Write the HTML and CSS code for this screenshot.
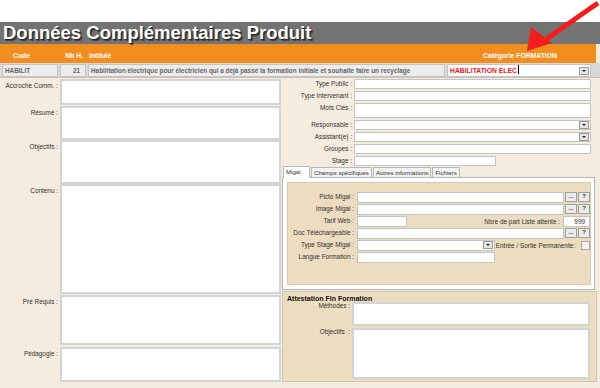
FILE: index.html
```html
<!DOCTYPE html>
<html lang="fr">
<head>
    <meta charset="UTF-8">
    <title>Données Complémentaires Produit</title>
    <link rel="stylesheet" href="styles.css">
</head>
<body>
    <div class="top-space"></div>

    <div class="title-bar">
        <h1>Données Complémentaires Produit</h1>
    </div>

    <div class="head-bar">
        <span class="col-code">Code</span>
        <span class="col-nbh">Nb H.</span>
        <span class="col-title">Intitulé</span>
        <span class="col-cat">Catégorie FORMATION</span>
    </div>

    <div class="info-row">
        <div class="field ro col-code">HABILIT</div>
        <div class="field ro col-nbh num">21</div>
        <div class="field ro col-title">Habilitation électrique pour électricien qui a déjà passé la formation initiale et souhaite faire un recyclage</div>
        <div class="field col-cat select red">HABILITATION ELEC<span class="caret-bar"></span><span class="drop"></span></div>
    </div>

    <div class="main">
        <!-- left column: text areas -->
        <div class="left-col">
            <label>Accroche Comm. :</label><div class="area h-acc"></div>
            <label class="l-res">Résumé :</label><div class="area h-res"></div>
            <label>Objectifs :</label><div class="area h-obj"></div>
            <label>Contenu :</label><div class="area h-cont"></div>
            <label class="l-pre">Pré Requis :</label><div class="area h-pre"></div>
            <label class="l-peda">Pédagogie :</label><div class="area h-peda"></div>
        </div>

        <!-- right column -->
        <div class="right-col">
            <div class="form-grid">
                <label>Type Public :</label><div class="field"></div>
                <label>Type Intervenant :</label><div class="field"></div>
                <label>Mots Clés :</label><div class="field tall"></div>
                <label>Responsable :</label><div class="field select"><span class="drop"></span></div>
                <label>Assistant(e) :</label><div class="field select"><span class="drop"></span></div>
                <label>Groupes :</label><div class="field"></div>
                <label>Stage :</label><div class="field short"></div>
            </div>

            <div class="tabs">
                <span class="tab active">Migal</span>
                <span class="tab">Champs spécifiques</span>
                <span class="tab">Autres informations</span>
                <span class="tab">Fichiers</span>
            </div>
            <div class="tab-panel">
                <div class="migal">
                    <label>Picto Migal :</label>
                    <div class="line"><div class="field grow"></div><span class="btn">...</span><span class="btn">?</span></div>

                    <label>Image Migal :</label>
                    <div class="line"><div class="field grow"></div><span class="btn">...</span><span class="btn">?</span></div>

                    <label>Tarif Web :</label>
                    <div class="line"><div class="field tarif"></div><span class="inline-label grow">Nbre de part Liste attente :</span><div class="field wait">999</div></div>

                    <label>Doc Téléchargeable :</label>
                    <div class="line"><div class="field grow"></div><span class="btn">...</span><span class="btn">?</span></div>

                    <label>Type Stage Migal :</label>
                    <div class="line"><div class="field select medium"><span class="drop"></span></div><span class="inline-label">Entrée / Sortie Permanente:</span><span class="check"></span></div>

                    <label>Langue Formation :</label>
                    <div class="line"><div class="field medium"></div></div>
                </div>
            </div>

            <div class="attest">
                <div class="attest-title">Attestation Fin Formation</div>
                <div class="attest-grid">
                    <label>Méthodes :</label><div class="area h-meth"></div>
                    <label>Objectifs&nbsp; :</label><div class="area h-aobj"></div>
                </div>
            </div>
        </div>
    </div>

    <svg class="arrow" width="80" height="64" viewBox="0 0 80 64">
        <line x1="76" y1="3" x2="20" y2="42" stroke="#f21d1d" stroke-width="5"/>
        <polygon points="5,51 9,27 30,43" fill="#f21d1d"/>
    </svg>
</body>
</html>
```

FILE: styles.css
```css
* {
    box-sizing: border-box;
}

body {
    margin: 0;
    width: 600px;
    height: 388px;
    overflow: hidden;
    background-color: #f4ecde;
    font-family: "Liberation Sans", Arial, sans-serif;
    font-size: 6.4px;
    color: #333;
    position: relative;
}

.top-space {
    height: 22px;
    background-color: #fff;
}

.title-bar {
    height: 22px;
    background-color: #737373;
}

h1 {
    margin: 0;
    padding-left: 3px;
    font-size: 18.5px;
    line-height: 22px;
    font-weight: bold;
    color: #fff;
    text-shadow: 1px 1px 1px #222, 2px 2px 1px #444;
}

/* header columns shared by the orange bar and the info row */
.head-bar,
.info-row {
    display: grid;
    grid-template-columns: 56px 26px 357px 144px;
    column-gap: 2px;
    padding-left: 2px;
}

.head-bar {
    height: 19px;
    width: 596px;
    background-color: #f28e20;
    color: #fff;
    font-weight: bold;
    font-size: 6.8px;
    align-items: center;
    padding-top: 3px;
}

.head-bar .col-code {
    padding-left: 11px;
}

.head-bar .col-nbh {
    text-align: right;
    padding-right: 3px;
}

.head-bar .col-title {
    padding-left: 1px;
}

.head-bar .col-cat {
    padding-left: 36px;
}

.info-row {
    height: 15px;
    background-color: #d9d9d9;
    padding-top: 1px;
    border-bottom: 1px solid #c9c2b6;
}

.field {
    height: 11px;
    background-color: #fff;
    border: 1px solid #c4c4c4;
    line-height: 9px;
    padding: 0 2px;
    white-space: nowrap;
    overflow: hidden;
    position: relative;
}

.info-row .field {
    height: 13px;
    line-height: 11px;
}

.field.ro {
    background-color: #ececec;
    color: #666;
    font-weight: bold;
}

.field.num {
    text-align: right;
    padding-right: 5px;
}

.field.red {
    color: #f01818;
    font-weight: bold;
    font-size: 6.8px;
}

.caret-bar {
    display: inline-block;
    width: 1px;
    height: 9px;
    background-color: #000;
    vertical-align: top;
    margin-left: 1px;
}

.drop {
    position: absolute;
    right: 1px;
    top: 0;
    width: 10px;
    height: 8px;
    background-color: #e4e4e4;
    border: 1px solid #9a9a9a;
}

.info-row .drop {
    top: 2px;
}

.drop::after {
    content: "";
    position: absolute;
    left: 2px;
    top: 2px;
    border-left: 2px solid transparent;
    border-right: 2px solid transparent;
    border-top: 2px solid #222;
}

.main {
    display: flex;
    padding-top: 1px;
}

label {
    text-align: right;
    white-space: nowrap;
    color: #333;
}

/* left column */
.left-col {
    width: 282px;
    display: grid;
    grid-template-columns: 58px 221px;
    column-gap: 2px;
    align-items: start;
}

.left-col label {
    padding-top: 3px;
}

.area {
    background-color: #fff;
    border: 2px solid #d4d4d4;
}

.h-acc { height: 26px; }
.h-res { height: 34px; margin-top: 1px; }
.h-obj { height: 44px; }
.h-cont { height: 110px; }
.h-pre { height: 50px; margin-top: 1px; }
.h-peda { height: 35px; margin-top: 2px; }

.left-col .l-res,
.left-col .l-pre {
    padding-top: 4px;
}

.left-col .l-peda {
    padding-top: 5px;
}

/* right column */
.right-col {
    width: 316px;
}

.form-grid {
    display: grid;
    grid-template-columns: 70px 237px;
    column-gap: 2px;
    row-gap: 2px;
    align-items: start;
}

.form-grid label {
    padding-top: 1px;
}

.form-grid .field {
    height: 10px;
}

.form-grid .field.tall {
    height: 15px;
}

.form-grid .field.short {
    width: 142px;
}

.tabs {
    display: flex;
    gap: 1px;
    padding-left: 1px;
    height: 11px;
    align-items: end;
}

.tab {
    height: 10px;
    padding: 0 2px;
    line-height: 9px;
    font-size: 6.1px;
    background-color: #f2f2f2;
    border: 1px solid #b8b8b8;
    border-bottom: none;
    color: #333;
}

.tab.active {
    height: 12px;
    width: 27px;
    background-color: #fff;
    position: relative;
    top: 1px;
}

.tab-panel {
    width: 313px;
    height: 113px;
    background-color: #fff;
    border: 1px solid #b8b8b8;
    padding: 4px 3px 4px 4px;
}

.migal {
    height: 103px;
    background-color: #ecdcc0;
    border: 1px solid #d6cab2;
    display: grid;
    grid-template-columns: 66px 233px;
    column-gap: 3px;
    row-gap: 2px;
    align-content: start;
    padding-top: 9px;
}

.migal label {
    padding-top: 1px;
}

.line {
    display: flex;
    align-items: center;
    gap: 1px;
    height: 10px;
}

.grow {
    flex: 1;
}

.btn {
    width: 12px;
    height: 10px;
    background-color: #ececec;
    border: 1px solid #9e9e9e;
    font-size: 6px;
    font-weight: bold;
    line-height: 7px;
    text-align: center;
    color: #333;
}

.field.tarif {
    width: 50px;
}

.inline-label {
    text-align: right;
    padding-right: 2px;
    white-space: nowrap;
}

.field.wait {
    width: 27px;
    text-align: right;
    padding-right: 4px;
}

.field.medium {
    width: 138px;
}

.check {
    width: 9px;
    height: 9px;
    margin-left: 3px;
    background-color: #f4f4f4;
    border: 1px solid #aaa;
}

.attest {
    width: 315px;
    height: 91px;
    margin-top: 1px;
    background-color: #ecdcc0;
    border: 1px solid #cfc6b6;
    padding: 2px 6px 0 4px;
}

.attest-title {
    font-weight: bold;
    color: #111;
    font-size: 7px;
    line-height: 9px;
}

.attest-grid {
    display: grid;
    grid-template-columns: 63px 238px;
    column-gap: 2px;
    row-gap: 2px;
    margin-top: -1px;
}

.h-meth { height: 24px; }
.h-aobj { height: 51px; }

.arrow {
    position: absolute;
    left: 522px;
    top: 0;
}
```
